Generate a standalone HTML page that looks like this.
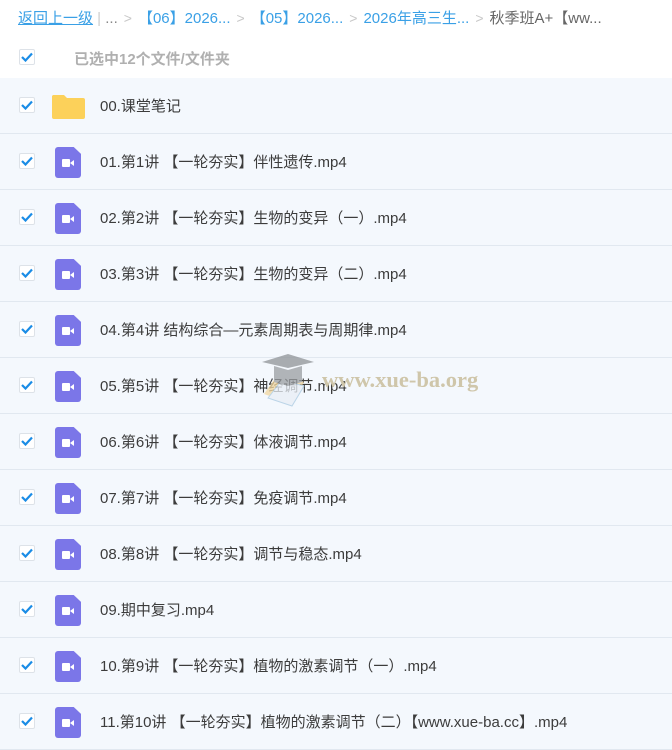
<!DOCTYPE html>
<html><head><meta charset="utf-8"><style>
body{margin:0;width:672px;height:721px;overflow:hidden;background:#fff;font-family:"Liberation Sans","Noto Sans CJK SC",sans-serif;position:relative}
.bc{position:absolute;top:7px;left:18px;font-size:15px;color:#3aa0e6;white-space:nowrap}
.bc u{color:#3aa0e6}
.bc .g{color:#c8c8c8;margin:0 6px;font-size:14px}
.bc .d{color:#666}
.cb{position:absolute;width:14px;height:14px;border:1px solid #dde2e8;border-radius:2px;background:#fff}
.cb svg{position:absolute;left:1px;top:2px}
.sel{position:absolute;left:74px;top:48px;font-size:15px;font-weight:bold;color:#b0b0b0}
.list{position:absolute;top:78px;left:0;width:672px;background:#f4f8fd}
.row{height:55px;border-bottom:1px solid #e1e8f0;position:relative}
.row .cb{left:19px;top:19px}
.row .t{position:absolute;left:100px;top:17px;font-size:15px;color:#3c3c3c;white-space:nowrap}
.vid{position:absolute;left:55px;top:13px;width:26px;height:31px;background:#7b76e8;border-radius:3px;clip-path:polygon(0 0,72% 0,100% 22%,100% 100%,0 100%)}
.vid i{position:absolute;left:7px;top:12px;width:8px;height:8px;background:#fff;border-radius:1px}
.vid b{position:absolute;left:15px;top:13px;width:0;height:0;border-top:3px solid transparent;border-bottom:3px solid transparent;border-right:4px solid #fff}
.wm{position:absolute;left:322px;top:367px;font-family:"Liberation Serif",serif;font-weight:bold;font-size:22.5px;color:#cfc6aa}
</style></head><body>
<div class="bc"><u>返回上一级</u><span style="color:#ccc"> | </span><span style="color:#888">...</span><span class="g">&gt;</span>【06】2026...<span class="g">&gt;</span>【05】2026...<span class="g">&gt;</span>2026年高三生...<span class="g">&gt;</span><span class="d">秋季班A+【ww...</span></div>
<div class="cb" style="left:19px;top:49px"><svg width="12" height="10"><path d="M1 5l3.5 3.5L11 1.5" stroke="#1a8ce6" stroke-width="2.2" fill="none"/></svg></div>
<div class="sel">已选中12个文件/文件夹</div>
<div class="list">
<div class="row"><div class="cb"><svg width="12" height="10"><path d="M1 5l3.5 3.5L11 1.5" stroke="#1a8ce6" stroke-width="2.2" fill="none"/></svg></div>
<svg style="position:absolute;left:51px;top:14px" width="35" height="28"><path d="M2 3h11l3 3h16a2 2 0 0 1 2 2v17a2 2 0 0 1-2 2H3a2 2 0 0 1-2-2V4z" fill="#fcd15a"/></svg>
<div class="t">00.课堂笔记</div></div>
<div class="row"><div class="cb"><svg width="12" height="10"><path d="M1 5l3.5 3.5L11 1.5" stroke="#1a8ce6" stroke-width="2.2" fill="none"/></svg></div><div class="vid"><i></i><b></b></div><div class="t">01.第1讲 【一轮夯实】伴性遗传.mp4</div></div>
<div class="row"><div class="cb"><svg width="12" height="10"><path d="M1 5l3.5 3.5L11 1.5" stroke="#1a8ce6" stroke-width="2.2" fill="none"/></svg></div><div class="vid"><i></i><b></b></div><div class="t">02.第2讲 【一轮夯实】生物的变异（一）.mp4</div></div>
<div class="row"><div class="cb"><svg width="12" height="10"><path d="M1 5l3.5 3.5L11 1.5" stroke="#1a8ce6" stroke-width="2.2" fill="none"/></svg></div><div class="vid"><i></i><b></b></div><div class="t">03.第3讲 【一轮夯实】生物的变异（二）.mp4</div></div>
<div class="row"><div class="cb"><svg width="12" height="10"><path d="M1 5l3.5 3.5L11 1.5" stroke="#1a8ce6" stroke-width="2.2" fill="none"/></svg></div><div class="vid"><i></i><b></b></div><div class="t">04.第4讲 结构综合—元素周期表与周期律.mp4</div></div>
<div class="row"><div class="cb"><svg width="12" height="10"><path d="M1 5l3.5 3.5L11 1.5" stroke="#1a8ce6" stroke-width="2.2" fill="none"/></svg></div><div class="vid"><i></i><b></b></div><div class="t">05.第5讲 【一轮夯实】神经调节.mp4</div></div>
<div class="row"><div class="cb"><svg width="12" height="10"><path d="M1 5l3.5 3.5L11 1.5" stroke="#1a8ce6" stroke-width="2.2" fill="none"/></svg></div><div class="vid"><i></i><b></b></div><div class="t">06.第6讲 【一轮夯实】体液调节.mp4</div></div>
<div class="row"><div class="cb"><svg width="12" height="10"><path d="M1 5l3.5 3.5L11 1.5" stroke="#1a8ce6" stroke-width="2.2" fill="none"/></svg></div><div class="vid"><i></i><b></b></div><div class="t">07.第7讲 【一轮夯实】免疫调节.mp4</div></div>
<div class="row"><div class="cb"><svg width="12" height="10"><path d="M1 5l3.5 3.5L11 1.5" stroke="#1a8ce6" stroke-width="2.2" fill="none"/></svg></div><div class="vid"><i></i><b></b></div><div class="t">08.第8讲 【一轮夯实】调节与稳态.mp4</div></div>
<div class="row"><div class="cb"><svg width="12" height="10"><path d="M1 5l3.5 3.5L11 1.5" stroke="#1a8ce6" stroke-width="2.2" fill="none"/></svg></div><div class="vid"><i></i><b></b></div><div class="t">09.期中复习.mp4</div></div>
<div class="row"><div class="cb"><svg width="12" height="10"><path d="M1 5l3.5 3.5L11 1.5" stroke="#1a8ce6" stroke-width="2.2" fill="none"/></svg></div><div class="vid"><i></i><b></b></div><div class="t">10.第9讲 【一轮夯实】植物的激素调节（一）.mp4</div></div>
<div class="row"><div class="cb"><svg width="12" height="10"><path d="M1 5l3.5 3.5L11 1.5" stroke="#1a8ce6" stroke-width="2.2" fill="none"/></svg></div><div class="vid"><i></i><b></b></div><div class="t">11.第10讲 【一轮夯实】植物的激素调节（二）【www.xue-ba.cc】.mp4</div></div>
</div>
<svg style="position:absolute;left:258px;top:352px;opacity:.75" width="64" height="62"><path d="M6 42l14-20 26 8-12 22z" fill="#f2d7a0"/><path d="M10 46l14-18 22 6-12 20z" fill="#e8eef5" stroke="#a8c8e0"/><path d="M4 10l26-8 26 8-26 6z" fill="#8f9397"/><path d="M16 14v16l14 4 14-4V14l-14 4z" fill="#9a9ea2"/></svg>
<div class="wm">www.xue-ba.org</div>
</body></html>
